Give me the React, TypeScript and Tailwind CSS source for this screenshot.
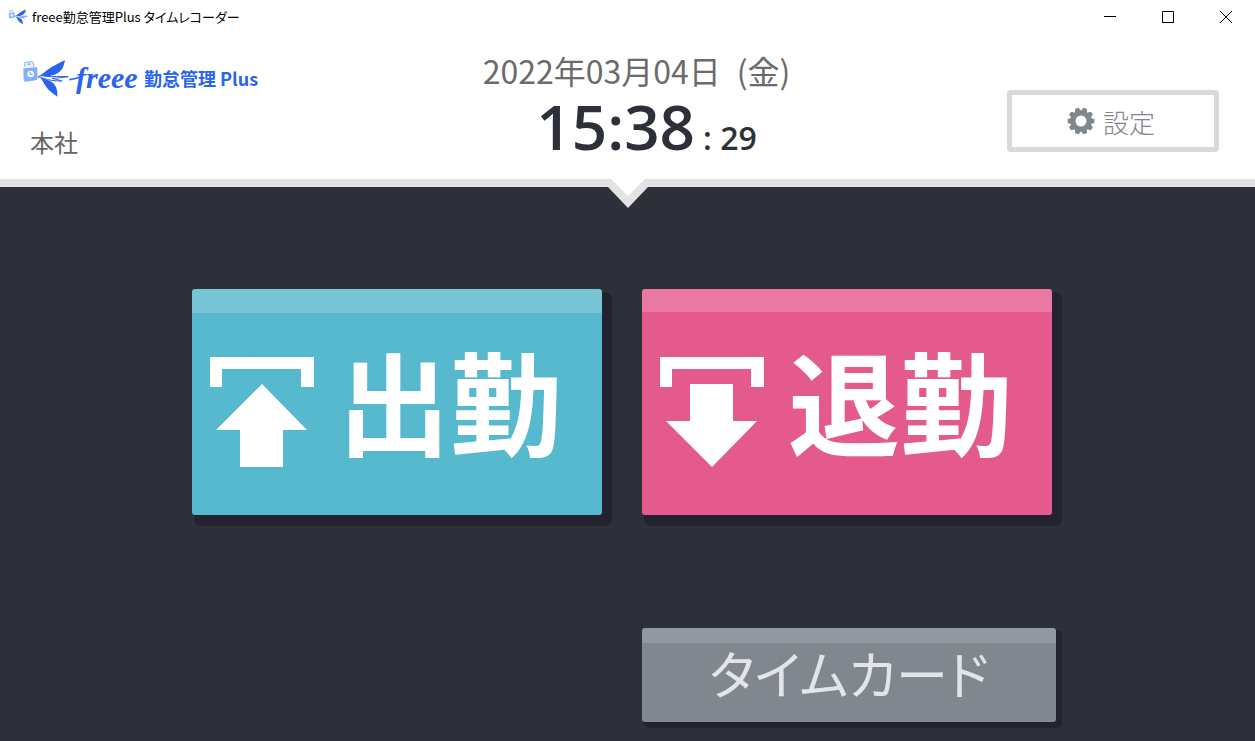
import type { ReactNode } from "react";
import { clsx } from "clsx";

const GEAR_TEETH = [0, 36, 72, 108, 144, 180, 216, 252, 288, 324];

function SwallowIcon({ className, viewBox }: { className?: string; viewBox: string }) {
  return (
    <svg className={className} viewBox={viewBox} aria-hidden="true">
      <path d="M76 51 73 41q-1-3 3-4l19-2q4 0 5 4l2 13" fill="#eaf1ff" stroke="#82acf8" strokeWidth="3" />
      <path d="M82 43l10-1" stroke="#6f9ff7" strokeWidth="3" />
      <path d="M70 55l38-3q4 0 4 4l1 29q0 5-5 6l-31 4q-5 0-6-5z" fill="#82b1fa" />
      <circle cx="92" cy="72" r="10" fill="#fff" />
      <path d="M91 65v8l7 1" fill="none" stroke="#5b92f6" strokeWidth="3" />
      <path d="M117 79c16-9 27-26 78-48-3 14-6 27-17 35-8 6-16 9-28 12z" fill="#2864f0" />
      <path d="M121 83c8 9 15 27 28 39 8 8 16 12 23 18 1-14-1-28-12-40-7-7-16-9-24-13z" fill="#2864f0" />
      <path
        d="M114 80c7-4 14-3 24-1 22 2 40-1 67 1-18 3-36 4-49 5 9 3 20 4 30 8-20 0-40-2-55-8-6-2-12-2-17-5z"
        fill="#fff"
        stroke="#2864f0"
        strokeWidth="3"
      />
      <path d="M208 89c12-1 20-4 34-8" fill="none" stroke="#2864f0" strokeWidth="5" />
    </svg>
  );
}

function GearIcon() {
  return (
    <svg className="size-7" viewBox="-14 -14 28 28" aria-hidden="true">
      <circle r="8" fill="none" stroke="#7f868c" strokeWidth="5" />
      {GEAR_TEETH.map((angle) => (
        <path key={angle} d="M9-3.4 13.4-1.8V1.8L9 3.4z" fill="#7f868c" transform={`rotate(${angle})`} />
      ))}
    </svg>
  );
}

function StampIcon({ direction }: { direction: "up" | "down" }) {
  return (
    <svg className="h-[110px] w-[104px] shrink-0" viewBox="0 0 104 110" fill="#fff" aria-hidden="true">
      <path d="M0 0h104v30H91V12H12v18H0z" />
      {direction === "up" ? (
        <path d="M52 27 97 73H73v37H30V73H6z" />
      ) : (
        <path d="M30 27h43v37h24L52 110 6 64h24z" />
      )}
    </svg>
  );
}

function TitleBar() {
  const control = "w-[58px] h-full flex items-center justify-center";
  return (
    <div className="flex h-[34px] items-center pl-2 text-black">
      <SwallowIcon className="h-4 w-5" viewBox="66 27 142 117" />
      <h1 className="ml-1 flex-1 text-[13px] leading-5 [font-feature-settings:'palt']">
        freee勤怠管理Plus タイムレコーダー
      </h1>
      <button type="button" className={control} aria-label="最小化">
        <svg className="size-3" viewBox="0 0 12 12" stroke="currentColor">
          <path d="M0 5.5h12" />
        </svg>
      </button>
      <button type="button" className={control} aria-label="最大化">
        <svg className="size-3" viewBox="0 0 12 12" stroke="currentColor" fill="none">
          <path d="M.5.5h11v11H.5z" />
        </svg>
      </button>
      <button type="button" className={control} aria-label="閉じる">
        <svg className="size-3" viewBox="0 0 12 12" stroke="currentColor">
          <path d="M0 0l12 12M12 0 0 12" />
        </svg>
      </button>
    </div>
  );
}

function Header() {
  return (
    <header className="relative flex h-[153px] items-start border-b-8 border-[#e3e3e3] pr-9">
      <div className="flex-1 pt-6 pl-[22px]">
        <div className="flex h-10 items-center text-[#2864f0]">
          <SwallowIcon className="h-[39px] w-[58px] shrink-0" viewBox="66 27 174 117" />
          <span className="-ml-1 w-[68px] font-['Liberation_Serif',serif] text-[30px] leading-8 font-bold italic">
            freee
          </span>
          <span className="text-[18px] leading-6 font-bold whitespace-nowrap">勤怠管理 Plus</span>
        </div>
        <p className="mt-7 pl-2 text-[24px] leading-8 text-[#666]">本社</p>
      </div>
      <div className="pt-5 pl-8">
        <p className="flex gap-4 text-[32px] leading-8 text-[#6b6b6b]">
          <span>2022年03月04日</span>
          <span>(金)</span>
        </p>
        <p className="flex items-baseline justify-center gap-2 pt-1 pl-5 font-['Open_Sans',sans-serif] font-semibold text-[#2e3039]">
          <span className="text-[62px] leading-[72px]">15:38</span>
          <span className="text-[32px] leading-9">: 29</span>
        </p>
      </div>
      <div className="flex flex-1 justify-end pt-14">
        <button
          type="button"
          className="flex h-[62px] w-[212px] items-center justify-center gap-2 rounded-sm border-[5px] border-[#d8d9da] pr-1 text-[26px] font-light text-[#7f868c]"
        >
          <GearIcon />
          設定
        </button>
      </div>
      <svg className="absolute top-[145px] left-1/2 h-[29px] w-10 -translate-x-1/2" viewBox="0 0 40 29" aria-hidden="true">
        <path d="M0 8V0h40v8L20 29z" fill="#e3e3e3" />
        <path d="M3 0h34L20 17z" fill="#fff" />
      </svg>
    </header>
  );
}

interface StampButtonProps {
  className: string;
  icon: ReactNode;
  children: ReactNode;
}

function StampButton({ className, icon, children }: StampButtonProps) {
  return (
    <button
      type="button"
      className={clsx(
        "flex h-[226px] items-start gap-6 rounded-[3px] pt-[68px] pl-[18px] text-[112px] leading-[84px] font-bold text-white shadow-[6px_7px_0_4px_#22232e]",
        className,
      )}
    >
      {icon}
      <span className="whitespace-nowrap">{children}</span>
    </button>
  );
}

export default function App() {
  return (
    <div className="flex min-h-screen flex-col bg-white font-['Noto_Sans_CJK_JP',sans-serif]">
      <TitleBar />
      <Header />
      <main className="flex-1 bg-[#2e3039] pt-[102px]">
        <div className="mx-auto grid w-full max-w-[871px] grid-cols-2 gap-x-10 gap-y-[113px] pr-[11px]">
          <StampButton
            className="bg-[#57b9cd] bg-linear-to-b from-[#77c5d4] from-[24px] to-[#57b9cd] to-[24px]"
            icon={<StampIcon direction="up" />}
          >
            出勤
          </StampButton>
          <StampButton
            className="bg-[#e45a8c] bg-linear-to-b from-[#e979a2] from-[23px] to-[#e45a8c] to-[23px]"
            icon={<StampIcon direction="down" />}
          >
            退勤
          </StampButton>
          <button
            type="button"
            className="col-start-2 -mr-1 h-[94px] rounded-[3px] bg-[#80878e] bg-linear-to-b from-[#91989f] from-[15px] to-[#80878e] to-[15px] pb-1 text-[52px] leading-[80px] text-[#e3e5e9] shadow-[4px_4px_0_2px_#22232e] [font-feature-settings:'palt']"
          >
            タイムカード
          </button>
        </div>
      </main>
    </div>
  );
}
